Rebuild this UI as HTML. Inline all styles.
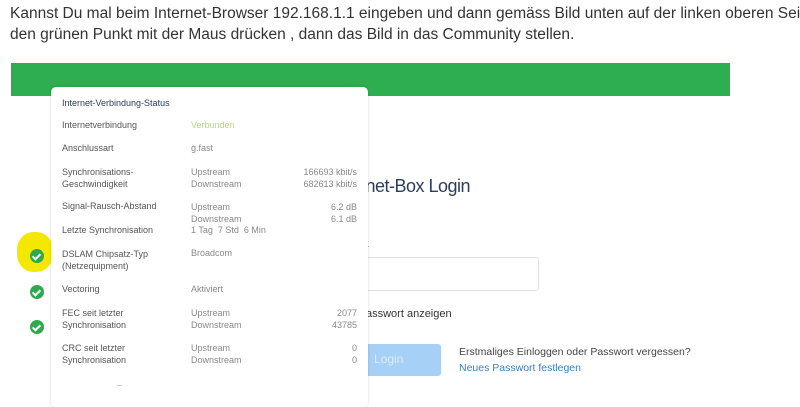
<!DOCTYPE html>
<html><head><meta charset="utf-8"><style>
body{margin:0;width:800px;height:400px;background:#fff;position:relative;overflow:hidden;font-family:"Liberation Sans",sans-serif}
.a{position:absolute;white-space:nowrap}
.p{font-size:9px;color:#555}
.m{color:#888}
.r{color:#888;text-align:right;width:80px}
.ck{position:absolute;width:14px;height:14px;border-radius:50%;background:#2eaa4c}
.ck:after{content:"";position:absolute;left:4px;top:3px;width:3px;height:6px;border:solid #fff;border-width:0 2px 2px 0;transform:rotate(45deg)}
</style></head><body>
<div class="a" style="left:10px;top:5px;font-size:15.5px;color:#333">Kannst Du mal beim Internet-Browser 192.168.1.1 eingeben und dann gemäss Bild unten auf der linken oberen Seite</div>
<div class="a" style="left:10px;top:26px;font-size:15.5px;color:#333">den grünen Punkt mit der Maus drücken , dann das Bild in das Community stellen.</div>
<div class="a" style="left:11px;top:63px;width:719px;height:33px;background:#2eae50"></div>
<div class="a" style="left:17px;top:232px;width:36px;height:40px;background:#f5e800;border-radius:45%"></div>
<div class="ck" style="left:30px;top:249px"></div>
<div class="ck" style="left:30px;top:285px"></div>
<div class="ck" style="left:30px;top:320px"></div>
<div class="a" style="left:360px;top:176px;font-size:18px;letter-spacing:-0.5px;color:#2c3e5a">rnet-Box Login</div>
<div class="a" style="left:366px;top:239px;font-size:10px;color:#777">t</div>
<div class="a" style="left:352px;top:257px;width:185px;height:32px;border:1px solid #e2e2e2;border-radius:3px"></div>
<div class="a" style="left:366px;top:308px;font-size:11px;color:#333">asswort anzeigen</div>
<div class="a" style="left:352px;top:344px;width:89px;height:32px;background:#a6d0f5;border-radius:3px"></div>
<div class="a" style="left:374px;top:352px;font-size:12px;color:#dcecfb">Login</div>
<div class="a" style="left:459px;top:346px;font-size:10.5px;color:#444">Erstmaliges Einloggen oder Passwort vergessen?</div>
<div class="a" style="left:459px;top:362px;font-size:10.5px;color:#3a7fc0">Neues Passwort festlegen</div>
<div class="a" style="left:51px;top:87px;width:317px;height:320px;background:#fff;border-radius:5px;box-shadow:0 0 3px rgba(0,0,0,.15)"></div>
<div class="a p" style="left:62px;top:98px;color:#2c3e5a">Internet-Verbindung-Status</div>
<div class="a p" style="left:62px;top:120px">Internetverbindung</div><div class="a p" style="left:191px;top:120px;color:#b9d68c">Verbunden</div>
<div class="a p" style="left:62px;top:143px">Anschlussart</div><div class="a p m" style="left:191px;top:143px">g.fast</div>
<div class="a p" style="left:62px;top:166px;line-height:12px">Synchronisations-<br>Geschwindigkeit</div><div class="a p m" style="left:191px;top:166px;line-height:12px">Upstream<br>Downstream</div><div class="a p r" style="left:277px;top:166px;line-height:12px">166693 kbit/s<br>682613 kbit/s</div>
<div class="a p" style="left:62px;top:201px">Signal-Rausch-Abstand</div><div class="a p m" style="left:191px;top:201px;line-height:12px">Upstream<br>Downstream</div><div class="a p r" style="left:277px;top:201px;line-height:12px">6.2 dB<br>6.1 dB</div>
<div class="a p" style="left:62px;top:225px">Letzte Synchronisation</div><div class="a p m" style="left:191px;top:225px">1 Tag &nbsp;7 Std &nbsp;6 Min</div>
<div class="a p" style="left:62px;top:248px;line-height:12px">DSLAM Chipsatz-Typ<br>(Netzequipment)</div><div class="a p m" style="left:191px;top:248px">Broadcom</div>
<div class="a p" style="left:62px;top:284px">Vectoring</div><div class="a p m" style="left:191px;top:284px">Aktiviert</div>
<div class="a p" style="left:62px;top:307px;line-height:12px">FEC seit letzter<br>Synchronisation</div><div class="a p m" style="left:191px;top:307px;line-height:12px">Upstream<br>Downstream</div><div class="a p r" style="left:277px;top:307px;line-height:12px">2077<br>43785</div>
<div class="a p" style="left:62px;top:342px;line-height:12px">CRC seit letzter<br>Synchronisation</div><div class="a p m" style="left:191px;top:342px;line-height:12px">Upstream<br>Downstream</div><div class="a p r" style="left:277px;top:342px;line-height:12px">0<br>0</div>
<div class="a" style="left:117px;top:385px;width:5px;height:1px;background:#ccc"></div>
</body></html>
